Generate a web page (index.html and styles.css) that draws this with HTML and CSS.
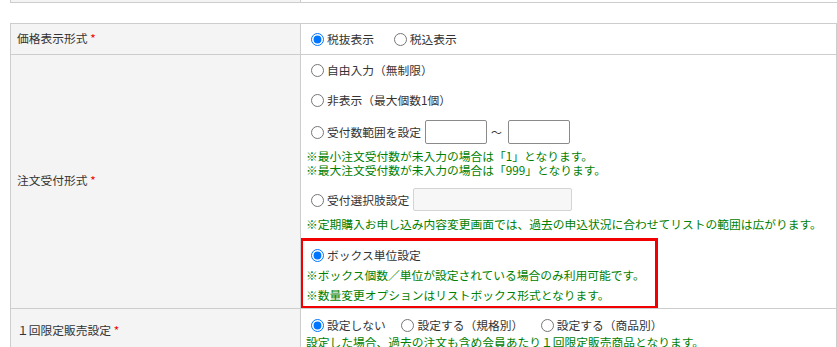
FILE: index.html
```html
<!DOCTYPE html>
<html lang="ja">
<head>
  <meta charset="UTF-8" />
  <meta name="viewport" content="width=device-width, initial-scale=1.0"/>
  <title>商品設定</title>
  <link rel="stylesheet" href="styles.css">
</head>
<body>
  <div class="prev-row">
    <div class="prev-label"></div>
    <div></div>
  </div>

  <table class="form-table">
    <colgroup><col class="col-label"><col></colgroup>
    <tr class="row-price">
      <th>価格表示形式 <span class="req">*</span></th>
      <td>
        <label class="opt-inline gap-wide"><input type="radio" name="tax" checked>税抜表示</label>
        <label class="opt-inline"><input type="radio" name="tax">税込表示</label>
      </td>
    </tr>
    <tr class="row-order">
      <th>注文受付形式 <span class="req">*</span></th>
      <td>
        <label class="opt"><input type="radio" name="order">自由入力（無制限）</label>
        <label class="opt"><input type="radio" name="order">非表示（最大個数1個）</label>
        <div class="opt opt-input">
          <label><input type="radio" name="order">受付数範囲を設定</label>
          <input type="text" class="num-box">
          <span class="tilde">～</span>
          <input type="text" class="num-box">
        </div>
        <p class="note note-tight">※最小注文受付数が未入力の場合は「1」となります。<br>※最大注文受付数が未入力の場合は「999」となります。</p>
        <div class="opt opt-input opt-select">
          <label><input type="radio" name="order">受付選択肢設定</label>
          <input type="text" class="choice-box" disabled>
        </div>
        <p class="note note-tight">※定期購入お申し込み内容変更画面では、過去の申込状況に合わせてリストの範囲は広がります。</p>
        <div class="highlight">
          <label class="opt-box"><input type="radio" name="order" checked>ボックス単位設定</label>
          <p class="note">※ボックス個数／単位が設定されている場合のみ利用可能です。</p>
          <p class="note">※数量変更オプションはリストボックス形式となります。</p>
        </div>
      </td>
    </tr>
    <tr class="row-limit">
      <th>１回限定販売設定 <span class="req">*</span></th>
      <td>
        <label class="opt-inline gap-mid"><input type="radio" name="limit" checked>設定しない</label>
        <label class="opt-inline gap-mid2"><input type="radio" name="limit">設定する（規格別）</label>
        <label class="opt-inline"><input type="radio" name="limit">設定する（商品別）</label>
        <p class="note note-tight">設定した場合、過去の注文も含め会員あたり１回限定販売商品となります。</p>
      </td>
    </tr>
  </table>
</body>
</html>
```

FILE: styles.css
```css
:root {
  --line: #cdcdcd;
  --label-bg: #f3f4f3;
  --green: #008000;
  --red: #f00000;
}

body {
  margin: 0;
  font-family: "Noto Sans CJK JP", "Noto Sans", sans-serif;
  font-size: 11.75px;
  color: #333;
  background: #fff;
}

.prev-row {
  display: grid;
  grid-template-columns: 290px 1fr;
  width: 826px;
  height: 2px;
  margin: 0 0 20px 10px;
  border-left: 1px solid var(--line);
  border-bottom: 1px solid var(--line);
}

.prev-label {
  background: var(--label-bg);
  border-right: 1px solid var(--line);
}

.form-table {
  width: 827px;
  margin-left: 10px;
  border-collapse: collapse;
  table-layout: fixed;
}

.col-label {
  width: 290px;
}

.form-table th,
.form-table td {
  border: 1px solid var(--line);
  vertical-align: middle;
  text-align: left;
}

.form-table th {
  background: var(--label-bg);
  font-weight: normal;
  padding: 0 6px 3px;
  line-height: 16px;
}

.form-table td {
  padding: 5px 5px;
  line-height: 20px;
}

.req {
  color: var(--red);
}

input[type="radio"] {
  width: 13px;
  height: 13px;
  margin: 0 3px 0 5px;
  vertical-align: -2px;
  accent-color: #0075ff;
}

.opt-inline {
  display: inline-block;
}

.gap-wide { margin-right: 12px; }
.gap-mid { margin-right: 8px; }
.gap-mid2 { margin-right: 10px; }

.row-order td {
  padding: 5px 5px 0;
}

.opt {
  display: block;
  margin-bottom: 10px;
}

.opt-input {
  display: flex;
  align-items: center;
  height: 24px;
  margin-bottom: 0;
}

.opt-input label {
  margin-right: 4px;
}

.opt-select {
  margin-top: 11px;
  height: 23px;
}

.num-box {
  width: 62px;
  height: 24px;
  box-sizing: border-box;
  border: 1px solid #8a8a8a;
  border-radius: 2px;
  padding: 0 4px;
}

.tilde {
  margin: 0 6px 0 4px;
  font-size: 11px;
}

.choice-box {
  width: 159px;
  height: 23px;
  box-sizing: border-box;
  border: 1px solid #d4d4d4;
  border-radius: 2px;
  background: #f7f7f7;
}

.note {
  margin: 0;
  color: var(--green);
}

.note-tight {
  line-height: 14px;
  margin-top: 5px;
}

.opt-select + .note-tight {
  margin-top: 6px;
}

.highlight {
  width: 358px;
  box-sizing: border-box;
  margin: 7px 0 -1px -6px;
  padding: 4px 3px 1px;
  border: 3px solid var(--red);
}

.opt-box {
  display: block;
}

.row-limit td {
  padding: 6px 5px 5px;
}

.row-limit .note-tight {
  margin-top: 0;
}
```
